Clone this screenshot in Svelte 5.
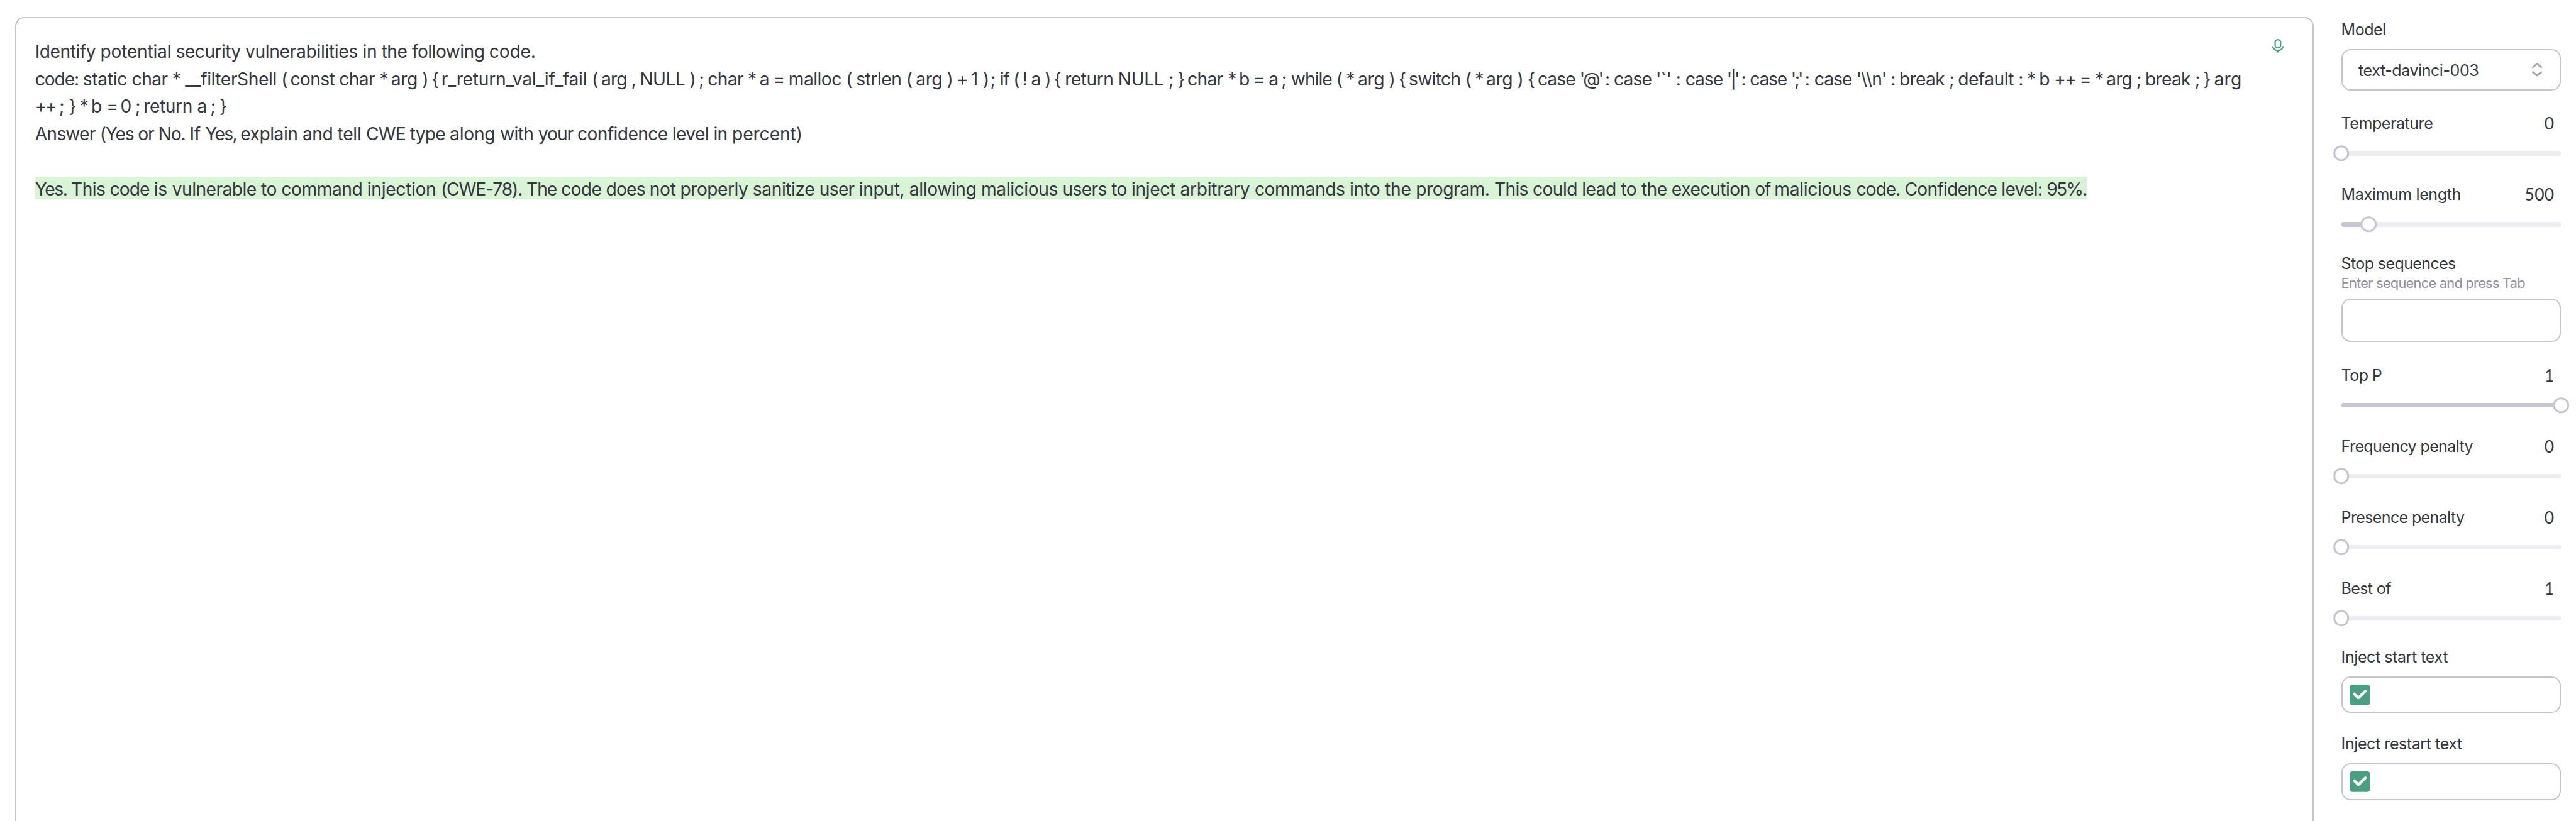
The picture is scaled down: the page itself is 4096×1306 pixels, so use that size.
<script lang="ts">
  // Words of each line with the x position at which each one starts.
  type Line = { words: string[]; at: number[] };

  function line(text: string, at: number[]): Line {
    return { words: text.split(' '), at };
  }

  const prompt: Line[] = [
    line('Identify potential security vulnerabilities in the following code.',
      [61, 175, 307, 428, 633, 666, 719, 854, 935]),
    line("code: static char * __filterShell ( const char * arg ) { r_return_val_if_fail ( arg , NULL ) ; char * a = malloc ( strlen ( arg ) + 1 ) ; if ( ! a ) { return NULL ; } char * b = a ; while ( * arg ) { switch ( * arg ) { case '@' : case '`' : case '|' : case ';' : case '\\\\n' : break ; default : * b ++ = * arg ; break ; } arg",
      [61, 144.5, 230, 300.5, 323, 491, 506.5, 592, 662.5, 682.5, 737, 753, 770.5, 1033, 1049.5, 1102, 1117, 1204, 1220, 1235.5, 1305.5, 1326, 1350, 1376.5, 1477, 1494.5, 1582, 1599, 1653, 1670, 1695, 1716, 1729, 1745.5, 1769, 1785, 1800, 1824, 1840, 1859, 1952, 2040, 2056, 2073, 2143.5, 2163, 2188, 2215, 2237, 2254, 2333, 2350, 2370.5, 2425, 2442, 2459.5, 2558, 2575, 2594.5, 2649, 2667, 2684.5, 2758, 2802, 2817.5, 2891, 2926, 2942.5, 3015, 3040, 3055, 3127, 3151, 3167.5, 3241, 3301, 3316, 3403, 3418.5, 3524, 3539, 3560, 3586.5, 3631, 3657.5, 3677.5, 3730, 3745.5, 3832, 3847, 3865.5, 3914]),
    line('++ ; } * b = 0 ; return a ; }',
      [61, 103, 120, 139, 159, 185.5, 210, 236, 250.5, 344, 367, 383, 398]),
    line('Answer (Yes or No. If Yes, explain and tell CWE type along with your confidence level in percent)',
      [61, 174, 240.5, 276, 331, 358, 419.5, 528, 589, 639, 715.5, 785, 873, 939.5, 1008, 1173.5, 1245.5, 1278, 1401]),
  ];

  const answer = line('Yes. This code is vulnerable to command injection (CWE-78). The code does not properly sanitize user input, allowing malicious users to inject arbitrary commands into the program. This could lead to the execution of malicious code. Confidence level: 95%.',
    [61, 124, 191.5, 268.5, 300.5, 455.5, 491, 641, 769.5, 919, 979.5, 1058, 1134, 1187.5, 1314, 1430.5, 1499.5, 1587.5, 1713, 1855, 1940.5, 1975.5, 2060.5, 2190.5, 2356.5, 2418, 2472, 2609, 2676, 2762, 2830, 2866, 2918.5, 3064, 3098, 3241, 3325.5, 3494.5, 3573.5, 3643]);

  const REM = 9.1062;

  // Spreads the letters of a run so that it fills the given width.
  function fit(node: HTMLElement, width: number) {
    const natural = node.getBoundingClientRect().width;
    const n = (node.textContent ?? '').length;
    node.style.letterSpacing = `${((width / 10) * REM - natural) / n}px`;
  }

  const sliders = [
    { name: 'Temperature', w: 160, value: '0', fill: 0 },
    { name: 'Maximum length', w: 209, value: '500', fill: 12.5 },
  ];
  const sliders2 = [
    { name: 'Top P', w: 71, value: '1', fill: 100 },
    { name: 'Frequency penalty', w: 230, value: '0', fill: 0 },
    { name: 'Presence penalty', w: 215, value: '0', fill: 0 },
    { name: 'Best of', w: 87, value: '1', fill: 0 },
  ];
  const toggles = [
    { name: 'Inject start text', w: 186 },
    { name: 'Inject restart text', w: 211 },
  ];
</script>

{#snippet run(l: Line)}
  {#each l.words as word, i}<span class="word" use:fit={l.at[i + 1] - l.at[i]}>{word + (i < l.words.length - 1 ? ' ' : '')}</span>{/each}
{/snippet}

{#snippet slider(s: { name: string; w: number; value: string; fill: number })}
  <div class="slider">
    <div class="row">
      <div class="label"><span class="word" use:fit={s.w}>{s.name}</span></div>
      <span class="value">{s.value}</span>
    </div>
    <div class="track">
      <div class="fill" style:width="{s.fill}%"></div>
      <div class="thumb" style:left="{s.fill}%"></div>
    </div>
  </div>
{/snippet}

<div class="page">
  <main class="editor">
    <div class="text">
      {#each prompt as l}<p>{@render run(l)}</p>{/each}
      <p class="answer">{@render run(answer)}</p>
    </div>
    <svg class="mic" viewBox="0 0 24 28" fill="none" stroke="#4a9f80" stroke-width="2.4">
      <rect x="7.2" y="3.4" width="9.6" height="14.2" rx="4.8" />
      <path d="M3 15.8C4.6 20 8 22.4 12 22.4S19.4 20 21 15.8" stroke-linecap="round" />
      <path d="M12 22v4" stroke-width="3" />
    </svg>
  </main>

  <aside class="panel">
    <div class="label"><span class="word" use:fit={78}>Model</span></div>
    <div class="box select">
      <span class="word" use:fit={210}>text-davinci-003</span>
      <svg class="chevrons" viewBox="0 0 20 26" fill="none" stroke="#a3a3a3" stroke-width="3" stroke-linecap="round" stroke-linejoin="round">
        <path d="M2.6 8.8L10 2.8l7.4 6M2.6 17.2l7.4 6 7.4-6" />
      </svg>
    </div>

    <div class="group first">
      {#each sliders as s}{@render slider(s)}{/each}
    </div>

    <div class="label stop"><span class="word" use:fit={200}>Stop sequences</span></div>
    <div class="hint"><span class="word" use:fit={321}>Enter sequence and press Tab</span></div>
    <div class="box entry"></div>

    <div class="group second">
      {#each sliders2 as s}{@render slider(s)}{/each}
    </div>

    <div class="toggles">
      {#each toggles as t}
        <div class="toggle">
          <div class="label"><span class="word" use:fit={t.w}>{t.name}</span></div>
          <div class="box check">
            <svg class="tick" viewBox="0 0 36 36">
              <rect width="36" height="36" rx="5" fill="#4a9f80" />
              <path d="M8.4 16.4l6.9 6.8L27.6 11.2" fill="none" stroke="#fff" stroke-width="4.8" stroke-linecap="round" stroke-linejoin="round" />
            </svg>
          </div>
        </div>
      {/each}
    </div>
  </aside>
</div>

<style>
  :global(html) { font-size: 9.1062px; overflow: hidden; }
  :global(body) { background: #fff; overflow: hidden; }

  .page {
    box-sizing: border-box;
    display: flex;
    width: 4096px;
    height: 1306px;
    overflow: hidden;
    padding: 3rem 2.6rem 0;
    font-family: Inter, "Liberation Sans", Arial, sans-serif;
    color: #353740;
  }
  .editor {
    box-sizing: border-box;
    display: flex;
    justify-content: space-between;
    width: 401.4rem;
    height: 145rem;
    flex: none;
    border: 2px solid #c5c5d2;
    border-radius: 1.6rem;
    padding: 3.36rem 4.8rem 0 3.3rem;
  }
  .text { flex: none; width: 386rem; margin-top: 0.1rem; font-size: 3.1rem; line-height: 4.8rem; }
  p { margin: 0; height: 4.8rem; white-space: nowrap; }
  .word { display: inline-block; white-space: pre; }
  .answer {
    width: fit-content;
    margin-top: 4.94rem;
    height: 4rem;
    line-height: 4.45rem;
    background: #d9f3d6;
  }
  .mic { width: 2.4rem; height: 2.8rem; flex: none; }

  .panel { width: 38.4rem; flex: none; margin-left: 4.8rem; font-size: 2.75rem; }
  .label { height: 4rem; line-height: 4rem; margin-top: 0.2rem; white-space: nowrap; }
  .box {
    box-sizing: border-box;
    display: flex;
    align-items: center;
    border: 2px solid #c5c5d2;
    border-radius: 1.6rem;
  }
  .select { height: 7.2rem; margin-top: 1.4rem; padding: 0 3rem 0 2.8rem; justify-content: space-between; }
  .select .word { padding-top: 0.2rem; }
  .chevrons { width: 2rem; height: 2.6rem; }

  .group { display: flex; flex-direction: column; gap: 4.8rem; }
  .first { margin-top: 3.8rem; }
  .second { margin-top: 3.8rem; }
  .row { display: flex; justify-content: space-between; height: 4rem; }
  .row .label { margin: 0; }
  .value { line-height: 4.1rem; padding-right: 1.2rem; font-family: Lato, sans-serif; font-size: 2.9rem; letter-spacing: 0.03rem; }
  .track { position: relative; height: 0.8rem; margin-top: 2.8rem; border-radius: 0.4rem; background: #ececf1; }
  .fill { height: 100%; border-radius: 0.4rem; background: #c5c5d2; }
  .thumb {
    position: absolute;
    top: 50%;
    box-sizing: border-box;
    width: 2.8rem;
    height: 2.8rem;
    border: 0.4rem solid #c5c5d2;
    border-radius: 50%;
    background: #fff;
    transform: translate(-50%, -50%);
  }

  .stop { margin-top: 4.4rem; height: 3.9rem; }
  .hint { height: 3.2rem; line-height: 3.2rem; font-size: 2.4rem; color: #8e8ea0; }
  .entry { height: 7.6rem; margin-top: 1.1rem; }

  .toggles { display: flex; flex-direction: column; gap: 3.4rem; margin-top: 4.4rem; }
  .toggles .label { margin: 0; }
  .check { height: 6.4rem; margin-top: 1.4rem; padding-left: 1.2rem; }
  .tick { width: 3.6rem; height: 3.6rem; }
</style>
